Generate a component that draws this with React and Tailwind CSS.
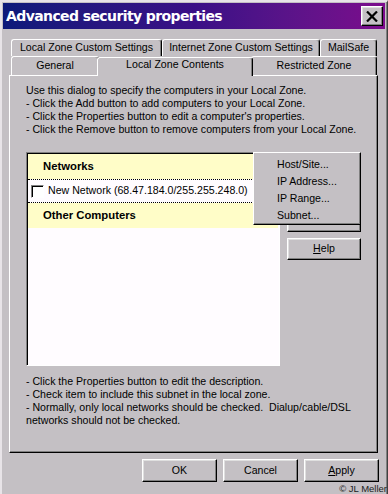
const raised =
  'border border-t-white border-l-white border-r-black border-b-black shadow-[inset_-1px_-1px_0_#808080,inset_1px_1px_0_#dfdfdf]'
const sunken =
  'border border-t-[#808080] border-l-[#808080] border-r-white border-b-white shadow-[inset_1px_1px_0_#000]'

function Tab({ label, w, selected }) {
  return (
    <div
      className={`h-full flex items-center justify-center border-t border-l border-r border-t-white border-l-white border-r-black rounded-t-[3px] shadow-[inset_-1px_0_0_#808080] whitespace-nowrap ${
        selected ? 'relative z-10 -mx-[2px] -mt-[2px] -mb-px h-[calc(100%+3px)] bg-[#c4c0c4] pb-[4px]' : ''
      }`}
      style={{ width: w }}
    >
      {label}
    </div>
  )
}

function Btn({ children, w = 74, h = 23, className = '' }) {
  return (
    <div
      className={`${raised} bg-[#c4c0c4] flex items-center justify-center ${className}`}
      style={{ width: w, height: h }}
    >
      {children}
    </div>
  )
}

export default function App() {
  return (
    <div
      className="w-[388px] h-[494px] bg-[#c4c0c4] relative overflow-hidden text-[10.6px] text-black flex flex-col border-l-2 border-t-2 border-r border-l-[#e8e4e8] border-t-[#e8e4e8] border-r-[#404040] pl-[1px] pt-px pr-[2px] shadow-[inset_-1px_0_0_#808080]"
      style={{ fontFamily: '"Liberation Sans", Arial, sans-serif' }}
    >
      {/* Title bar */}
      <div className="h-[26px] flex items-center justify-between pl-[3px] pr-[2px] bg-gradient-to-r from-[#0c1a7a] via-[#3a0f86] to-[#7c0a8c]">
        <span
          className="text-white font-bold text-[14px] tracking-[-0.6px]"
          style={{ fontFamily: '"DejaVu Sans", sans-serif' }}
        >
          Advanced security properties
        </span>
        <div className={`${raised} bg-[#c4c0c4] w-[22px] h-[20px] flex items-center justify-center`}>
          <svg width="12" height="11" viewBox="0 0 12 11">
            <path d="M1 0.5 L11 10.5 M11 0.5 L1 10.5" stroke="#000" strokeWidth="2.2" />
          </svg>
        </div>
      </div>

      {/* Body */}
      <div className="pl-[6px] pt-[10px]">
        <div className="pl-[2px]">
          <div className="flex h-[17px]">
            <Tab label="Local Zone Custom Settings" w={151} />
            <Tab label="Internet Zone Custom Settings" w={158} />
            <Tab label="MailSafe" w={57} />
          </div>
          <div className="flex h-[19px] items-end">
            <Tab label="General" w={88} />
            <Tab label="Local Zone Contents" w={156} selected />
            <Tab label="Restricted Zone" w={126} />
          </div>
        </div>

        {/* Panel */}
        <div className="w-[369px] h-[378px] border border-t-white border-l-white border-r-black border-b-black shadow-[inset_-1px_-1px_0_#808080] pl-[16px] pt-[8px]">
          <div className="leading-[13px] whitespace-nowrap">
            <div>Use this dialog to specify the computers in your Local Zone.</div>
            <div>- Click the Add button to add computers to your Local Zone.</div>
            <div>- Click the Properties button to edit a computer's properties.</div>
            <div>- Click the Remove button to remove computers from your Local Zone.</div>
          </div>

          <div className="flex gap-[7px] mt-[16px] relative">
            <div className={`${sunken} w-[254px] h-[214px] bg-[#fffcff] p-px`}>
              <div className="h-[25px] bg-[#fffdc8] flex items-center pl-[15px] font-bold text-[11.3px]">
                Networks
              </div>
              <div className="h-[24px] border-y border-dotted border-black flex items-center pl-[3px] gap-[4px] whitespace-nowrap overflow-hidden">
                <div className={`${sunken} w-[13px] h-[13px] bg-white shrink-0`} />
                <span>New Network (68.47.184.0/255.255.248.0)</span>
              </div>
              <div className="h-[25px] bg-[#fffdc8] flex items-center pl-[15px] font-bold text-[11.3px]">
                Other Computers
              </div>
            </div>

            <div className="flex flex-col gap-[5px] pt-px">
              <Btn />
              <Btn />
              <Btn />
              <Btn h={22} className="mt-[1px]">
                <span>
                  <span className="underline">H</span>elp
                </span>
              </Btn>
            </div>

            {/* Popup menu */}
            <div className="absolute left-[227px] top-0 w-[108px] h-[73px] bg-[#c4c0c4] border border-t-white border-l-white border-r-black border-b-black shadow-[inset_-1px_-1px_0_#808080] z-20 pl-[23px] pt-[3px] leading-[17px]">
              <div>Host/Site...</div>
              <div>IP Address...</div>
              <div>IP Range...</div>
              <div>Subnet...</div>
            </div>
          </div>

          <div className="leading-[13px] mt-[9px] whitespace-nowrap">
            <div>- Click the Properties button to edit the description.</div>
            <div>- Check item to include this subnet in the local zone.</div>
            <div>- Normally, only local networks should be checked.&nbsp; Dialup/cable/DSL</div>
            <div>networks should not be checked.</div>
          </div>
        </div>

        {/* Bottom buttons */}
        <div className="flex justify-end gap-[6px] w-[370px] mt-[6px]">
          <Btn w={75}>OK</Btn>
          <Btn w={75}>Cancel</Btn>
          <Btn w={75}>
            <span>
              <span className="underline">A</span>pply
            </span>
          </Btn>
        </div>
      </div>

      <div className="absolute right-0 bottom-0 text-[9.5px] leading-[10px] text-[#202020] whitespace-nowrap">© JL Meller</div>
    </div>
  )
}
